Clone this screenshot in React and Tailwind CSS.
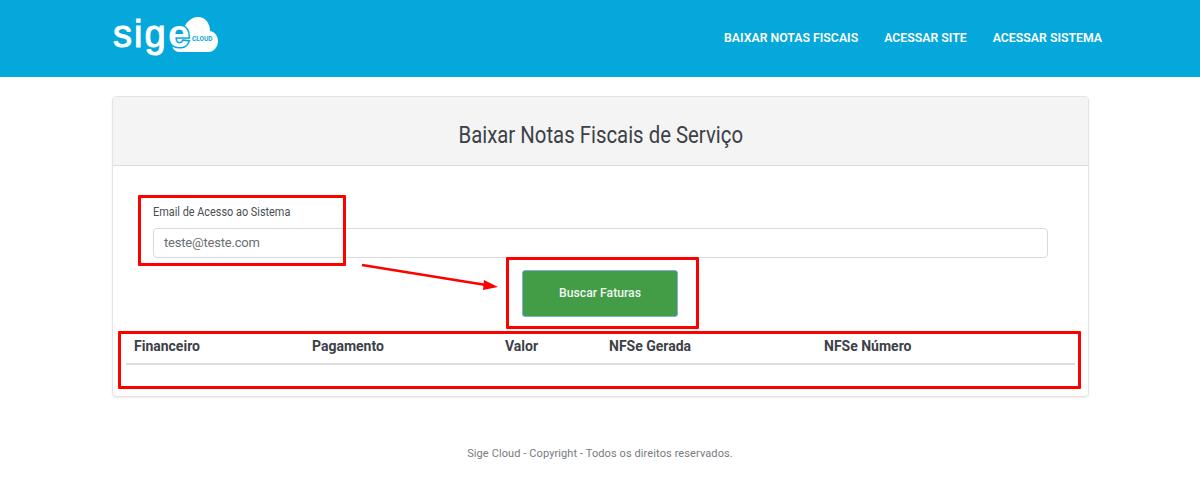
import React from 'react';

const columns = [
  { label: 'Financeiro', width: 'w-[178px]' },
  { label: 'Pagamento', width: 'w-[193px]' },
  { label: 'Valor', width: 'w-[104px]' },
  { label: 'NFSe Gerada', width: 'w-[215px]' },
  { label: 'NFSe Número', width: 'flex-1' },
];

const Logo = () => (
  <div className="relative w-[108px] h-[45px]">
    <svg className="absolute left-[58px] top-[1px]" width="48" height="35" viewBox="0 0 48 35">
      <path
        d="M10 35 C2 35 0 27 6 22 C8 20 11 20 12 20 C12 8 20 0 28 0 C35 0 40 6 40 14 C45 15 48 19 48 24 C48 30 44 35 38 35 Z"
        fill="#fff"
      />
    </svg>
    <span className="absolute left-[1px] top-[-1px] font-['Liberation_Sans',sans-serif] text-[38px] leading-[38px] tracking-[2px] text-white [-webkit-text-stroke:1px_#fff]">
      sig
    </span>
    <span className="absolute left-[56px] top-[-1px] font-['Liberation_Sans',sans-serif] font-bold text-[39px] leading-[38px] text-white [-webkit-text-stroke:3px_#05a8db] [paint-order:stroke_fill]">
      e
    </span>
    <span className="absolute left-[80px] top-[19px] font-['Roboto',sans-serif] font-bold text-[6.5px] leading-[8px] text-[#05a8db]">
      CLOUD
    </span>
  </div>
);

export default function App() {
  return (
    <div className="relative w-[1200px] h-[478px] overflow-hidden bg-white font-['Roboto',sans-serif]">
      <header className="h-[77px] bg-[#05a8db] flex items-center justify-between pl-[112px] pr-[98px]">
        <Logo />
        <nav className="flex gap-[26px] text-[12.3px] font-semibold text-white">
          <a>BAIXAR NOTAS FISCAIS</a>
          <a>ACESSAR SITE</a>
          <a>ACESSAR SISTEMA</a>
        </nav>
      </header>

      <main className="ml-[112px] mt-[19px] w-[977px] h-[301px] border border-[#e4e4e4] rounded shadow-[0_1px_2px_rgba(0,0,0,0.08)]">
        <div className="h-[69px] pt-[10px] bg-[#f4f4f4] border-b border-[#dddddd] flex items-center justify-center text-[23px] text-[#3c4148]">
          <span className="scale-x-[0.885]">Baixar Notas Fiscais de Serviço</span>
        </div>
        <div className="pt-[39px] px-[40px]">
          <label className="block origin-left scale-x-[0.907] text-[12px] leading-[14px] text-[#4a4f55]">Email de Acesso ao Sistema</label>
          <div className="mt-[9px] w-[895px] h-[30px] border border-[#d9d9d9] rounded flex items-center pl-[10px] text-[13px] tracking-[-0.2px] text-[#6b6f73]">
            teste@teste.com
          </div>
          <div className="mt-[12px] flex justify-center pr-[1px]">
            <button className="w-[156px] h-[47px] bg-[#439c46] border border-[#7fb0dc] rounded-[3px] text-[12.2px] font-medium text-[#f2f7f2]">
              Buscar Faturas
            </button>
          </div>
        </div>
        <div className="mt-[18px] mx-[13px]">
          <div className="h-[30px] pl-[8px] flex items-center text-[14px] font-bold text-[#3c4148] border-b-2 border-[#dddddd] pb-[5px]">
            {columns.map((c) => (
              <div key={c.label} className={c.width}>{c.label}</div>
            ))}
          </div>
        </div>
      </main>

      <footer className="mt-[49px] text-center text-[11px] tracking-[0.1px] text-[#777b80]">
        Sige Cloud - Copyright - Todos os direitos reservados.
      </footer>

      {/* Red annotations over the page */}
      <div className="absolute left-[138px] top-[195px] w-[208px] h-[71px] border-[3px] border-[#ff0000] rounded-[1px]" />
      <div className="absolute left-[506px] top-[257px] w-[193px] h-[72px] border-[3px] border-[#ff0000] rounded-[1px]" />
      <div className="absolute left-[118px] top-[331px] w-[963px] h-[58px] border-[3px] border-[#ff0000] rounded-[1px]" />
      <svg className="absolute left-[360px] top-[262px]" width="140" height="30" viewBox="0 0 140 30">
        <line x1="2" y1="3" x2="126" y2="23" stroke="#ff0000" strokeWidth="2.5" />
        <polygon points="138,25 124,18 123,28" fill="#ff0000" />
      </svg>
    </div>
  );
}
